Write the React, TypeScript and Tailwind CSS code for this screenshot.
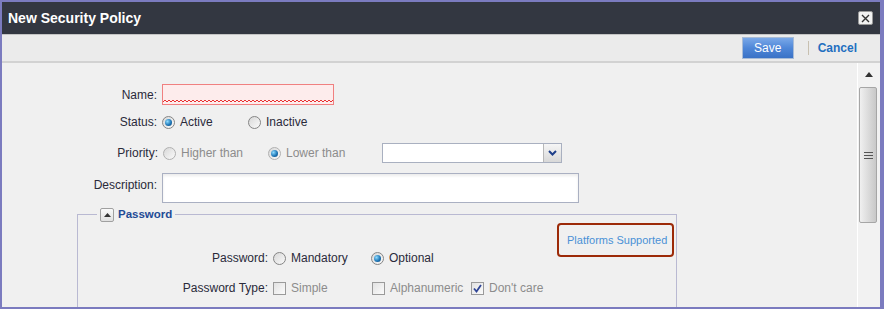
import React from "react";

function Radio({ checked, disabled }: { checked?: boolean; disabled?: boolean }) {
  return (
    <span
      className={`flex h-[13px] w-[13px] shrink-0 items-center justify-center rounded-full border bg-linear-to-br from-[#d8d8d8] to-[#fafafa] ${
        disabled ? "border-[#b0b0b0]" : "border-[#858585]"
      }`}
    >
      {checked && (
        <span className="h-[7px] w-[7px] rounded-full bg-[radial-gradient(circle_at_35%_35%,#8fdcff,#1f78b8_55%,#0b3f72)]" />
      )}
    </span>
  );
}

function Check({ checked }: { checked?: boolean }) {
  return (
    <span className="flex h-[13px] w-[13px] shrink-0 items-center justify-center border border-[#9a9a9a] bg-linear-to-br from-[#e2e2e2] to-[#fbfbfb]">
      {checked && (
        <svg width="11" height="11" viewBox="0 0 11 11">
          <path d="M2 5.5 L4.5 8.5 L9 2" fill="none" stroke="#2f4596" strokeWidth="1.8" />
        </svg>
      )}
    </span>
  );
}

function Option({ children, className, dim }: { children: React.ReactNode; className?: string; dim?: boolean }) {
  return (
    <div className={`flex items-center gap-[5px] ${dim ? "text-[#8c8c8c]" : "text-[#2a2a3a]"} ${className ?? ""}`}>
      {children}
    </div>
  );
}

export default function App() {
  return (
    <div className="flex h-[309px] w-[884px] flex-col overflow-hidden border-t-2 border-r-4 border-b-2 border-l-2 border-[#7b7bbf] font-['Liberation_Sans',Arial,sans-serif] text-[12px] text-[#2a2a3a]">
      {/* title bar */}
      <div className="flex h-[32px] shrink-0 items-center justify-between bg-[#333741] pr-[7px] pl-[6px]">
        <span className="text-[14px] font-bold text-white">New Security Policy</span>
        <button className="flex h-[14px] w-[15px] items-center justify-center rounded-[2px] border border-[#9a9a9a] bg-[#f2f2f2]">
          <svg width="9" height="9" viewBox="0 0 9 9">
            <path d="M1 1 L8 8 M8 1 L1 8" stroke="#333" strokeWidth="1.4" />
          </svg>
        </button>
      </div>

      {/* toolbar */}
      <div className="flex h-[29px] shrink-0 items-center justify-end border-t border-b-2 border-t-[#c4c4c4] border-b-[#d2d2d2] bg-[#ebebeb] pr-[23px]">
        <button className="h-[22px] w-[52px] border border-[#a9bcd6] bg-linear-to-b from-[#7aa8e8] via-[#4f87d8] to-[#3a72c6] text-[12px] text-white">
          Save
        </button>
        <span className="ml-[14px] h-[14px] w-px bg-[#c8c0b0]" />
        <a className="ml-[9px] font-bold text-[#1f6fc0]">Cancel</a>
      </div>

      {/* body */}
      <div className="flex min-h-0 flex-1 bg-[#f0f0f0]">
        <div className="min-w-0 flex-1 overflow-hidden border-r border-white">
          <div className="mt-[21px] flex h-[21px] items-center">
            <div className="w-[155px] text-right">Name:</div>
            <div className="ml-[5px] flex h-[21px] w-[172px] flex-col justify-end border border-[#f08080] bg-[#fdecec]">
              <svg width="170" height="4" className="mb-[1px]">
                <defs>
                  <pattern id="zig" width="4" height="4" patternUnits="userSpaceOnUse">
                    <path d="M0 3 L2 1 L4 3" fill="none" stroke="#e83030" strokeWidth="1" />
                  </pattern>
                </defs>
                <rect width="170" height="4" fill="url(#zig)" />
              </svg>
            </div>
          </div>

          <div className="mt-[7px] flex h-[20px] items-center">
            <div className="w-[155px] text-right">Status:</div>
            <Option className="ml-[5px] w-[86px]">
              <Radio checked />
              <span>Active</span>
            </Option>
            <Option>
              <Radio />
              <span>Inactive</span>
            </Option>
          </div>

          <div className="mt-[11px] flex h-[20px] items-center">
            <div className="w-[156px] text-right">Priority:</div>
            <Option dim className="ml-[5px] w-[105px]">
              <Radio disabled />
              <span>Higher than</span>
            </Option>
            <Option dim className="w-[114px]">
              <Radio checked disabled />
              <span>Lower than</span>
            </Option>
            <div className="flex h-[20px] w-[180px] border border-[#a9b0c0] bg-white">
              <div className="flex-1" />
              <div className="flex w-[18px] items-center justify-center border-l border-[#b8b8b8] bg-linear-to-b from-[#f6f6f6] to-[#d8d8d8]">
                <svg width="9" height="6" viewBox="0 0 9 6">
                  <path d="M1 1 L4.5 4.5 L8 1" fill="none" stroke="#1e3f8a" strokeWidth="2" />
                </svg>
              </div>
            </div>
          </div>

          <div className="mt-[10px] flex h-[30px] items-start">
            <div className="w-[155px] pt-[3px] text-right">Description:</div>
            <div className="ml-[5px] h-[30px] w-[417px] border border-[#aab0c2] bg-white shadow-[inset_0_2px_3px_rgba(0,0,0,0.08)]" />
          </div>

          <fieldset className="mt-[3px] ml-[75px] w-[600px] border border-[#b9b9d2] pb-[40px]">
            <legend className="ml-[19px] flex items-center gap-[4px] px-[3px]">
              <span className="flex h-[14px] w-[14px] items-center justify-center rounded-[2px] border border-[#a0a0a0] bg-linear-to-b from-[#fafafa] to-[#e0e0e0]">
                <svg width="7" height="4" viewBox="0 0 7 4">
                  <path d="M0 4 L3.5 0 L7 4 Z" fill="#333" />
                </svg>
              </span>
              <span className="text-[11.5px] font-bold text-[#1f4b96]">Password</span>
            </legend>

            <div className="flex">
              <div className="flex-1">
                <div className="mt-[25px] flex h-[20px] items-center">
                  <div className="w-[190px] text-right">Password:</div>
                  <Option className="ml-[5px] w-[98px] gap-[4px]">
                    <Radio />
                    <span>Mandatory</span>
                  </Option>
                  <Option className="gap-[4px]">
                    <Radio checked />
                    <span>Optional</span>
                  </Option>
                </div>
                <div className="mt-[10px] flex h-[20px] items-center">
                  <div className="w-[190px] text-right">Password Type:</div>
                  <Option dim className="ml-[5px] w-[99px] gap-[4px]">
                    <Check />
                    <span>Simple</span>
                  </Option>
                  <Option dim className="w-[99px] gap-[4px]">
                    <Check />
                    <span>Alphanumeric</span>
                  </Option>
                  <Option dim className="gap-[4px]">
                    <Check checked />
                    <span>Don't care</span>
                  </Option>
                </div>
              </div>
              <div className="mr-[2px] flex h-[34px] w-[117px] items-center rounded-[4px] border-2 border-[#9c2a08] pl-[8px] text-[11px] text-[#4a90d6]">
                Platforms Supported
              </div>
            </div>
          </fieldset>
        </div>

        {/* scrollbar */}
        <div className="flex w-[22px] shrink-0 flex-col bg-[#f2f2f2]">
          <div className="flex h-[22px] items-center justify-center">
            <svg width="8" height="5" viewBox="0 0 8 5">
              <path d="M0 5 L4 0 L8 5 Z" fill="#333" />
            </svg>
          </div>
          <div className="mt-[2px] ml-[1px] flex h-[136px] w-[18px] flex-col items-center justify-center gap-[2px] rounded-[2px] border border-[#a6a6a6] bg-linear-to-r from-[#f0f0f0] via-[#dcdcdc] to-[#c8c8c8]">
            <span className="h-px w-[9px] bg-[#555]" />
            <span className="h-px w-[9px] bg-[#555]" />
            <span className="h-px w-[9px] bg-[#555]" />
          </div>
        </div>
      </div>
    </div>
  );
}
